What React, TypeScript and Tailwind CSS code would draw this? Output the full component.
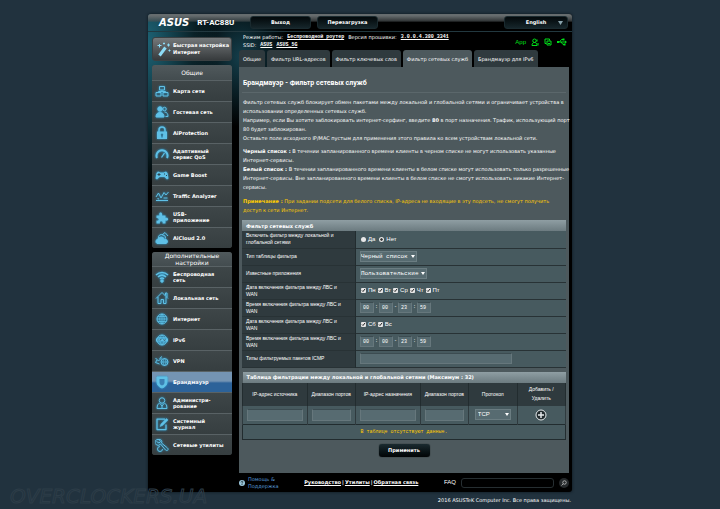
import { useState } from 'react';
import type { ReactNode } from 'react';

const iconClass = 'w-[14px] h-[14px] shrink-0 text-[#5fc0e6] drop-shadow-[0_0_1px_#2a9fd6]';

function Icon({ children }: { children: ReactNode }) {
  return (
    <svg viewBox="0 0 28 28" className={iconClass} fill="none" stroke="currentColor" strokeWidth="2" strokeLinejoin="round" aria-hidden="true">
      {children}
    </svg>
  );
}

const icons = {
  map: (
    <Icon>
      <path d="M9 5h10v7H9zM2 17h10v7H2zM16 17h10v7H16zM14 12v3M7 17v-2h14v2" />
    </Icon>
  ),
  guests: (
    <Icon>
      <circle cx="10" cy="8" r="4.5" fill="currentColor" />
      <path d="M2 24c0-6 3-9 8-9s8 3 8 9z" fill="currentColor" />
      <circle cx="19" cy="8" r="3.5" />
      <path d="M19 14c5 0 7 4 7 9h-5" />
    </Icon>
  ),
  lock: (
    <Icon>
      <path d="M8 12V8a6 6 0 0 1 12 0v4" strokeWidth="3" />
      <path fillRule="evenodd" stroke="none" fill="currentColor" d="M4 11h20v15H4zM14 15a2.500 2.500 0 0 0-1.500 4.500V23h3v-3.500A2.500 2.500 0 0 0 14 15z" />
    </Icon>
  ),
  gauge: (
    <Icon>
      <path d="M4 22a11 11 0 1 1 20 0" strokeWidth="4" />
      <path d="M13 21l6-9" strokeWidth="2.500" />
    </Icon>
  ),
  gamepad: (
    <Icon>
      <path d="M6 7l5 2h6l5-2 3 3 2 11-3 2-5-5H9l-5 5-3-2 2-11z" fill="currentColor" stroke="none" />
      <path d="M8 10v6M5 13h6M18 12h2M22 15h2" stroke="#2c4650" />
    </Icon>
  ),
  traffic: (
    <Icon>
      <path d="M2 16l5-8 5 10 6-11 4 5 5-6M2 23h24M5 19l3 1M17 18h8" />
    </Icon>
  ),
  puzzle: (
    <Icon>
      <path d="M3 11h6c-3-8 7-8 5 0h7v5c7-2 7 7 0 5v6h-6c2-6-7-6-5 0H3v-6c6 2 6-6 0-5z" fill="currentColor" stroke="none" />
    </Icon>
  ),
  cloud: (
    <Icon>
      <path d="M7 15a6 6 0 0 1 9-7 6 6 0 0 1 5 7" />
      <path d="M14 8l6-5 6 7" />
      <path d="M4 25a5 5 0 0 1 2-9 7 7 0 0 1 13 1 4 4 0 0 1 3 8z" fill="currentColor" />
    </Icon>
  ),
  wifi: (
    <Icon>
      <path d="M2 10c7-7 17-7 24 0M6 14c5-5 11-5 16 0M10 18c3-3 5-3 8 0" strokeWidth="3" />
      <circle cx="14" cy="22" r="2.500" fill="currentColor" />
    </Icon>
  ),
  home: (
    <Icon>
      <path d="M2 15L14 3l12 12M6 12v13h6v-8h5v8h5V12M21 9V4h3v8" />
    </Icon>
  ),
  globe: (
    <Icon>
      <circle cx="14" cy="14" r="10" />
      <path d="M4 14h20M14 4v20M6 9h16M6 19h16M14 4c-6 6-6 14 0 20M14 4c6 6 6 14 0 20" strokeWidth="1.500" />
    </Icon>
  ),
  ipv6: (
    <Icon>
      <circle cx="14" cy="14" r="10" />
      <path d="M6 9h16M6 20h16M14 4c-6 6-6 14 0 20M14 4c6 6 6 14 0 20" strokeWidth="1.500" />
      <path d="M2 11h24v6H2z" fill="currentColor" stroke="none" />
      <path d="M6 12v4M10 16v-3h3M17 12l2 4 2-4" stroke="#2c4650" strokeWidth="1" />
    </Icon>
  ),
  vpn: (
    <Icon>
      <circle cx="19" cy="16" r="7" />
      <path d="M12 16h14M19 9c-4 5-4 9 0 14M19 9c4 5 4 9 0 14" strokeWidth="1.500" />
      <path d="M1 8l6 6 6-6M4 12l-3 5 8 3M9 9l5-4" />
    </Icon>
  ),
  shield: (
    <Icon>
      <path d="M4 4h20v10c0 6-4 10-10 12C8 24 4 20 4 14z" fill="currentColor" />
      <path d="M9 8h10v7c0 3-2 5-5 6-3-1-5-3-5-6z" fill="#3b80b4" stroke="none" />
    </Icon>
  ),
  admin: (
    <Icon>
      <circle cx="14" cy="9" r="5.500" />
      <path d="M9 14l-4 4-1 7h20l-1-7-4-4M10 15l4 5 4-5M14 20v5" />
    </Icon>
  ),
  journal: (
    <Icon>
      <path d="M20 4H4v21h18V15" strokeWidth="2.500" />
      <path d="M10 19l2-5L23 3l3 3-11 11z" fill="currentColor" strokeWidth="1" />
    </Icon>
  ),
  tools: (
    <Icon>
      <path d="M8 3a6 6 0 1 0 3 9l10 12c4 3 7-1 4-4L13 10c2-4-1-8-5-7l3 4-3 3-5-3" />
      <path d="M10 17a5 5 0 1 0 5 5" />
    </Icon>
  ),
};

const general = [
  { icon: icons.map, lines: ['Карта сети'] },
  { icon: icons.guests, lines: ['Гостевая сеть'] },
  { icon: icons.lock, lines: ['AiProtection'] },
  { icon: icons.gauge, lines: ['Адаптивный', 'сервис QoS'] },
  { icon: icons.gamepad, lines: ['Game Boost'] },
  { icon: icons.traffic, lines: ['Traffic Analyzer'] },
  { icon: icons.puzzle, lines: ['USB-', 'приложение'] },
  { icon: icons.cloud, lines: ['AiCloud 2.0'] },
];

const advanced = [
  { icon: icons.wifi, lines: ['Беспроводная', 'сеть'] },
  { icon: icons.home, lines: ['Локальная сеть'] },
  { icon: icons.globe, lines: ['Интернет'] },
  { icon: icons.ipv6, lines: ['IPv6'] },
  { icon: icons.vpn, lines: ['VPN'] },
  { icon: icons.shield, lines: ['Брандмауэр'], active: true },
  { icon: icons.admin, lines: ['Администри-', 'рование'] },
  { icon: icons.journal, lines: ['Системный', 'журнал'] },
  { icon: icons.tools, lines: ['Сетевые утилиты'] },
];

const tabs = ['Общие', 'Фильтр URL-адресов', 'Фильтр ключевых слов', 'Фильтр сетевых служб', 'Брандмауэр для IPv6'];

type Item = { icon: ReactNode; lines: string[]; active?: boolean };

function Lines({ lines }: { lines: string[] }) {
  return (
    <span className="flex flex-col">
      {lines.map((line) => (
        <span key={line}>{line}</span>
      ))}
    </span>
  );
}

function MenuSection({ title, items, headClass }: { title: string[]; items: Item[]; headClass: string }) {
  return (
    <section className="rounded-[3px] overflow-hidden bg-[#394143]">
      <h2 className={`flex items-center justify-center text-center bg-gradient-to-b from-[#50595c] to-[#434c4f] text-[6px] leading-[7px] font-medium font-['DejaVu_Sans',sans-serif] ${headClass}`}>
        <Lines lines={title} />
      </h2>
      <ul className="font-['DejaVu_Sans',sans-serif] text-[5px] leading-[6px] font-bold">
        {items.map((item) => (
          <li key={item.lines[0]} className="h-[21px] border-t border-[#596265]">
            <a href="#" className={`flex items-center h-full gap-1 pl-[3px] whitespace-nowrap ${item.active ? 'bg-gradient-to-b from-[#7494b3] from-45% to-[#2c6299] to-55%' : 'bg-gradient-to-b from-[#3e4648] to-[#363e40]'}`}>
              {item.icon}
              <Lines lines={item.lines} />
            </a>
          </li>
        ))}
      </ul>
    </section>
  );
}

const fieldClass = 'bg-[#576b71] border border-[#66777c] border-t-[#3c4c51] text-white outline-none';

function Select({ id, label, options, className }: { id: string; label?: string; options: string[]; className: string }) {
  return (
    <span className="relative inline-flex">
      <select id={id} aria-label={label} className={`appearance-none h-[11px] bg-[#576b71] border border-[#6b7d82] text-[6px] leading-[9px] outline-none ${className}`}>
        {options.map((o) => (
          <option key={o}>{o}</option>
        ))}
      </select>
      <svg viewBox="0 0 4 3" className="absolute right-[2px] top-1 w-1 h-[3px] pointer-events-none" fill="white" aria-hidden="true">
        <path d="M0 0h4L2 3z" />
      </svg>
    </span>
  );
}

function DayCheck({ label }: { label: string }) {
  return (
    <label className="flex items-center gap-[2px] text-[6px] leading-[7px] font-['Liberation_Sans',sans-serif]">
      <span className="relative flex">
        <input type="checkbox" defaultChecked className="appearance-none w-[5px] h-[5px] rounded-[1px] bg-[#e6e6e6]" />
        <svg viewBox="0 0 5 5" className="absolute inset-0 w-[5px] h-[5px] pointer-events-none" fill="none" stroke="#222" aria-hidden="true">
          <path d="M1 2.500l1 1L4 1" />
        </svg>
      </span>
      {label}
    </label>
  );
}

function TimeRange({ name }: { name: string }) {
  const [time, setTime] = useState(['00', '00', '23', '59']);
  const separators = [':', '-', ':'];
  return (
    <span className="flex items-center gap-[1px] font-['Liberation_Mono',monospace] text-[5px] leading-[9px]">
      {time.map((value, i) => (
        <span key={i} className="flex items-center gap-[1px]">
          <input
            aria-label={`${name} ${i + 1}`}
            value={value}
            maxLength={2}
            onChange={(e) => setTime(time.map((v, j) => (j === i ? e.target.value : v)))}
            className={`w-[14px] h-[11px] pl-[2px] ${fieldClass}`}
          />
          {separators[i]}
        </span>
      ))}
    </span>
  );
}

function Row({ label, htmlFor, children }: { label: string[]; htmlFor?: string; children: ReactNode }) {
  return (
    <tr className="h-[17px] border-b border-[#283235]">
      <th scope="row" className="pl-1 text-left font-normal align-middle bg-[#2f3a3e] border-r border-[#222c2f]">
        <label htmlFor={htmlFor} className="block leading-[7px]">
          <Lines lines={label} />
        </label>
      </th>
      <td className="pl-1 align-middle bg-[#475a5f]">
        <div className="flex items-center">{children}</div>
      </td>
    </tr>
  );
}

const tableHead = "h-[11px] px-1 text-left text-[5px] leading-[10px] font-bold font-['DejaVu_Sans',sans-serif] bg-gradient-to-b from-[#8f9ea3] to-[#6c7b80]";
const buttonClass = "bg-gradient-to-b from-[#1b2b30] to-[#020506] rounded-[3px] text-[5px] leading-[7px] font-bold font-['DejaVu_Sans',sans-serif] shadow-[0_0_1px_#000]";
const headButton = "h-[13px] bg-gradient-to-b from-[#04090b] to-[#16262b] rounded-[3px] text-[5px] leading-[7px] font-bold font-['DejaVu_Sans',sans-serif] border border-[#1a2a2f]";
const link = 'underline font-bold';

export default function App() {
  const [tab, setTab] = useState(3);
  const [allow, setAllow] = useState('no');

  return (
    <div className="relative min-h-screen pt-[14px] bg-[#21323e] text-white font-['Liberation_Sans',sans-serif] text-[5px] leading-[9px]">
      <main className="relative mx-auto w-full max-w-[424px] rounded-[3px] overflow-hidden bg-black bg-[radial-gradient(ellipse_70px_150px_at_0%_6%,#1d6274,transparent),radial-gradient(ellipse_50px_70px_at_22%_9%,#143f4c,transparent)] shadow-[0_0_3px_#0a141a]">
        <header className="flex items-start h-[18px] pt-[2px] pl-[11px] pr-1 border-b border-[#22383f] bg-gradient-to-b from-[#666c6e] from-10% via-[#4a5052]/70 via-40% to-transparent to-50%">
          <span className="flex items-center h-[14px] w-[91px] gap-[8px] whitespace-nowrap">
            <span className="font-['DejaVu_Sans',sans-serif] font-bold italic text-[10px] leading-[14px]">ASUS</span>
            <span className="font-bold font-['Roboto',sans-serif] text-[8px] leading-[14px]">RT-AC88U</span>
          </span>
          <button type="button" className={`w-[61px] ${headButton}`}>Выход</button>
          <button type="button" className={`w-[61px] ml-[6px] ${headButton}`}>Перезагрузка</button>
          <button type="button" className={`relative w-16 ml-auto ${headButton}`}>
            English
            <svg viewBox="0 0 5 4" className="absolute right-1 top-1 w-[5px] h-1" fill="#8aa4ae" aria-hidden="true">
              <path d="M0 0h5L2.500 4z" />
            </svg>
          </button>
        </header>

        <div className="flex pl-1 pr-[3px] gap-[7px]">
          <nav className="w-20 shrink-0 flex flex-col gap-1 pt-[5px]">
            <button type="button" className="flex items-center gap-[2px] h-6 pl-1 rounded-[3px] text-left whitespace-nowrap border border-[#3b4042] bg-gradient-to-b from-[#75797b] to-[#373b3d] text-[5px] leading-[7px] font-bold font-['DejaVu_Sans',sans-serif]">
              <svg viewBox="0 0 28 28" className="w-[14px] h-[16px] shrink-0 text-[#8ddcf7]" fill="none" stroke="currentColor" strokeWidth="2" aria-hidden="true">
                <path d="M5 27L17 11" strokeWidth="6" />
                <path d="M5 4v7M1 7h8M14 1v4M12 3h4M23 3v6M20 6h6M25 15v4M23 17h4" />
              </svg>
              <Lines lines={['Быстрая настройка', 'Интернет']} />
            </button>
            <MenuSection title={['Общие']} items={general} headClass="h-[15px]" />
            <MenuSection title={['Дополнительные', 'настройки']} items={advanced} headClass="h-[14px]" />
          </nav>

          <div className="flex-1 min-w-0">
            <div className="flex justify-between h-[18px] pl-1 pr-[2px] pt-[1px]">
              <div className="text-[5px] leading-[8px] font-['DejaVu_Sans',sans-serif] whitespace-nowrap">
                <div className="flex gap-1">
                  <span>Режим работы:</span>
                  <a href="#" className={`${link} font-['Liberation_Mono',monospace]`}>Беспроводной роутер</a>
                  <span>Версия прошивки:</span>
                  <a href="#" className={`${link} font-['Liberation_Mono',monospace]`}>3.0.0.4.380_3341</a>
                </div>
                <div className="flex gap-1">
                  <span>SSID:</span>
                  <a href="#" className={`${link} font-['Liberation_Mono',monospace]`}>ASUS</a>
                  <a href="#" className={`${link} font-['Liberation_Mono',monospace]`}>ASUS_5G</a>
                </div>
              </div>
              <div className="flex items-center gap-[5px] text-[#00e01a] text-[6px] leading-[8px]">
                <span>App</span>
                <svg viewBox="0 0 16 16" className="w-2 h-2" fill="none" stroke="currentColor" strokeWidth="2" aria-hidden="true">
                  <path d="M7 2a3 3 0 0 1 0 7 3 3 0 0 1 0-7zM2 15c0-4 2-6 5-6s5 2 5 6zM12 3v4M14 10v5" />
                </svg>
                <svg viewBox="0 0 16 16" className="w-2 h-2" fill="none" stroke="currentColor" strokeWidth="2" aria-hidden="true">
                  <path d="M5 11H2V2h9v3M6 6h8v8H6zM8 11h4" />
                </svg>
                <svg viewBox="0 0 20 16" className="w-[10px] h-2" fill="none" stroke="currentColor" strokeWidth="2" aria-hidden="true">
                  <path d="M2 8h15M5 8l4-5h3M8 8l4 5h3" />
                  <path d="M16 5l4 3-4 3zM0 6h4v4H0zM11 1h4v4h-4zM13 11h4v4h-4z" fill="currentColor" stroke="none" />
                </svg>
              </div>
            </div>

            <div className="flex gap-[2px]">
              {tabs.map((t, i) => (
                <button
                  key={t}
                  type="button"
                  onClick={() => setTab(i)}
                  className={`h-[17px] px-1 rounded-t-[3px] text-[5px] leading-[8px] font-['DejaVu_Sans',sans-serif] whitespace-nowrap ${tab === i ? 'bg-[#4d595d]' : 'bg-[#2f3a3e]'}`}
                >
                  {t}
                </button>
              ))}
            </div>

            <div className="bg-[#4d595d] px-[3px] pb-4">
              <h1 className="h-[26px] pt-[11px] px-[1px] border-b border-[#5b676b] font-['Roboto',sans-serif] text-[7px] leading-[10px] font-bold">Брандмауэр - Фильтр сетевых служб</h1>
              <div className="flex flex-col gap-1 px-[1px] pt-[5px] pb-[5px] font-['DejaVu_Sans',sans-serif] text-[5px] leading-[9px] whitespace-nowrap">
                <p>
                  Фильтр сетевых служб блокирует обмен пакетами между локальной и глобальной сетями и ограничивает устройства в<br />
                  использовании определенных сетевых служб.<br />
                  Например, если Вы хотите заблокировать интернет-серфинг, введите <b>80</b> в порт назначения. Трафик, использующий порт<br />
                  80 будет заблокирован.<br />
                  Оставьте поле исходного IP/MAC пустым для применения этого правила ко всем устройствам локальной сети.
                </p>
                <p>
                  <b>Черный список :</b> В течении запланированного времени клиенты в черном списке не могут использовать указанные<br />
                  Интернет-сервисы.<br />
                  <b>Белый список :</b> В течении запланированного времени клиенты в белом списке могут использовать только разрешенные<br />
                  Интернет-сервисы. Вне запланированного времени клиенты в белом списке не смогут использовать никакие Интернет-<br />
                  сервисы.
                </p>
                <p className="pt-[1px] text-[#ffcc00]">
                  <b>Примечание :</b> При задании подсети для белого списка, IP-адреса не входящие в эту подсеть, не смогут получить<br />
                  доступ к сети Интернет.
                </p>
              </div>

              <table className="w-full table-fixed border-collapse">
                <thead>
                  <tr>
                    <th className={`${tableHead} w-[35%]`}>Фильтр сетевых служб</th>
                    <th className={tableHead} aria-label="Значение" />
                  </tr>
                </thead>
                <tbody>
                  <Row label={['Включить фильтр между локальной и', 'глобальной сетями']}>
                    <div className="flex items-center gap-1 pl-[1px] text-[6px] leading-[7px]">
                      {[['yes', 'Да'], ['no', 'Нет']].map(([value, text]) => (
                        <label key={value} className="flex items-center gap-[2px]">
                          <input
                            type="radio"
                            name="allow"
                            checked={allow === value}
                            onChange={() => setAllow(value)}
                            className="appearance-none w-[5px] h-[5px] rounded-full bg-[#e8e8e8] checked:bg-[radial-gradient(#333_25%,#e8e8e8_45%)]"
                          />
                          {text}
                        </label>
                      ))}
                    </div>
                  </Row>
                  <Row label={['Тип таблицы фильтра']} htmlFor="list-type">
                    <Select id="list-type" options={['Черный список', 'Белый список']} className="w-[57px] font-['Liberation_Mono',monospace]" />
                  </Row>
                  <Row label={['Известные приложения']} htmlFor="known-apps">
                    <Select id="known-apps" options={['Пользовательские']} className="w-[67px] font-['Liberation_Mono',monospace]" />
                  </Row>
                  <Row label={['Дата включения фильтра между ЛВС и', 'WAN']}>
                    <div className="flex gap-[2px] pl-[1px]">
                      {['Пн', 'Вт', 'Ср', 'Чт', 'Пт'].map((d) => <DayCheck key={d} label={d} />)}
                    </div>
                  </Row>
                  <Row label={['Время включения фильтра между ЛВС и', 'WAN']}>
                    <TimeRange name="Время" />
                  </Row>
                  <Row label={['Дата включения фильтра между ЛВС и', 'WAN']}>
                    <div className="flex gap-[2px] pl-[1px]">
                      {['Сб', 'Вс'].map((d) => <DayCheck key={d} label={d} />)}
                    </div>
                  </Row>
                  <Row label={['Время включения фильтра между ЛВС и', 'WAN']}>
                    <TimeRange name="Время выходных" />
                  </Row>
                  <Row label={['Типы фильтруемых пакетов ICMP']} htmlFor="icmp">
                    <input id="icmp" className={`w-[152px] h-[11px] px-[2px] ${fieldClass}`} />
                  </Row>
                </tbody>
              </table>

              <table className="w-full mt-1 table-fixed border-collapse text-center">
                <colgroup>
                  <col className="w-[20%]" />
                  <col className="w-[15%]" />
                  <col className="w-[20%]" />
                  <col className="w-[15%]" />
                  <col className="w-[15%]" />
                  <col className="w-[15%]" />
                </colgroup>
                <thead>
                  <tr>
                    <th colSpan={6} className={tableHead}>Таблица фильтрации между локальной и глобальной сетями (Максимум : 32)</th>
                  </tr>
                  <tr className="h-[23px] bg-[#2f3a3e] [&>th]:font-normal [&>th]:border-x [&>th]:border-[#222c2f]">
                    <th>IP-адрес источника</th>
                    <th>Диапазон портов</th>
                    <th>IP-адрес назначения</th>
                    <th>Диапазон портов</th>
                    <th>Протокол</th>
                    <th>Добавить /<br />Удалить</th>
                  </tr>
                </thead>
                <tbody className="bg-[#475a5f]">
                  <tr className="h-[19px] border-b border-[#222c2f] [&>td]:px-1 [&>td]:border-x [&>td]:border-[#2f3a3e]">
                    {['IP-адрес источника', 'Порты источника', 'IP-адрес назначения', 'Порты назначения'].map((label) => (
                      <td key={label}>
                        <input aria-label={label} className={`block w-full h-3 px-[2px] ${fieldClass}`} />
                      </td>
                    ))}
                    <td>
                      <div className="flex justify-center">
                        <Select id="protocol" label="Протокол" options={['TCP', 'UDP']} className="w-9 pl-[2px]" />
                      </div>
                    </td>
                    <td>
                      <button type="button" aria-label="Добавить" className="flex mx-auto">
                        <svg viewBox="0 0 24 24" className="w-3 h-3" fill="#222b2e" stroke="#e6eaec" strokeWidth="2" aria-hidden="true">
                          <circle cx="12" cy="12" r="10" />
                          <path d="M12 6v12M6 12h12" strokeWidth="3" />
                        </svg>
                      </button>
                    </td>
                  </tr>
                  <tr className="h-[15px] border border-[#222c2f]">
                    <td colSpan={6} className="font-['Liberation_Mono',monospace] text-[#ffcc00]">В таблице отсутствуют данные.</td>
                  </tr>
                </tbody>
              </table>

              <div className="flex justify-center pt-1">
                <button type="button" className={`w-[51px] h-[13px] ${buttonClass}`}>Применить</button>
              </div>
            </div>
          </div>
        </div>

        <footer className="flex items-center justify-between h-[19px] pl-[91px] pr-[3px] font-['DejaVu_Sans',sans-serif]">
          <a href="#" className="flex items-center gap-[3px] text-[#569ad8] text-[5px] leading-[7px]">
            <svg viewBox="0 0 12 12" className="w-[6px] h-[6px]" aria-hidden="true">
              <circle cx="6" cy="6" r="6" fill="#9cc8dd" />
              <path d="M4 5c0-3 4-3 4-1 0 2-2 1-2 3M6 8v2" fill="none" stroke="#102028" strokeWidth="1.500" />
            </svg>
            <Lines lines={['Помощь &', 'Поддержка']} />
          </a>
          <span className="flex gap-[1px] font-bold">
            <a href="#" className="underline">Руководство</a>|
            <a href="#" className="underline">Утилиты</a>|
            <a href="#" className="underline">Обратная связь</a>
          </span>
          <span className="flex items-center gap-[5px]">
            <label htmlFor="faq" className="text-[6px] font-['Liberation_Sans',sans-serif]">FAQ</label>
            <input id="faq" className="w-[93px] h-[10px] px-1 rounded-[3px] bg-black border border-[#262e31] outline-none" />
            <button type="button" aria-label="Поиск" className="flex items-center justify-center w-[10px] h-[10px] rounded-full bg-[#25292b]">
              <svg viewBox="0 0 12 12" className="w-[6px] h-[6px]" fill="none" stroke="#ccc" strokeWidth="1.500" aria-hidden="true">
                <circle cx="7" cy="5" r="3.500" />
                <path d="M4.500 7.500L1 11" />
              </svg>
            </button>
          </span>
        </footer>
      </main>
      <p className="mx-auto w-full max-w-[424px] pt-1 pr-[1px] text-right font-['DejaVu_Sans',sans-serif]">2016 ASUSTeK Computer Inc. Все права защищены.</p>
      <div className="absolute left-[10px] bottom-[3px] text-[20px] leading-[20px] italic whitespace-nowrap font-['DejaVu_Sans',sans-serif] text-transparent [-webkit-text-stroke:1px_#2d3d48] pointer-events-none">OVERCLOCKERS.UA</div>
    </div>
  );
}
